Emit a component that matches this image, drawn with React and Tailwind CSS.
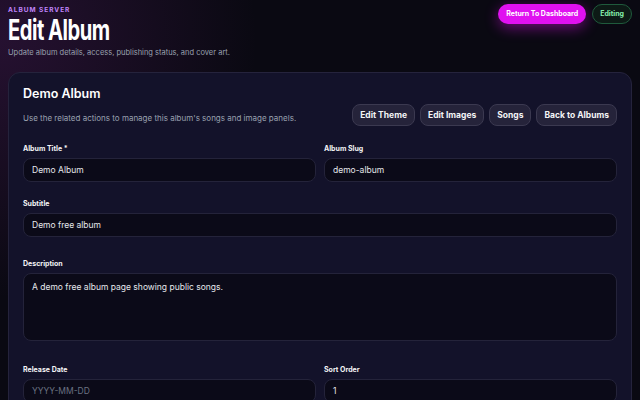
import React from "react";

function Field({ label, value, placeholder, className = "" }) {
  return (
    <div className={className}>
      <div className="text-[7px] font-bold text-gray-100 mb-[5px] leading-[9px]">{label}</div>
      <div className="h-[24px] rounded-lg border border-[#24233a] bg-[#0b0a18] px-2 flex items-center text-[8.5px]">
        {value ? <span className="text-gray-200">{value}</span> : <span className="text-gray-500">{placeholder}</span>}
      </div>
    </div>
  );
}

export default function App() {
  return (
    <div
      className="w-[640px] h-[400px] overflow-hidden bg-[#0a0912] text-white px-2 pt-[4px]"
      style={{ fontFamily: "Inter, 'Noto Sans', sans-serif", backgroundImage: "radial-gradient(circle at 0% 10%, rgba(120,40,140,0.25), transparent 35%)" }}
    >
      <div className="flex justify-between">
        <div>
          <div className="text-[6.5px] font-bold tracking-[0.15em] text-[#c084fc] mt-[1px] leading-[10px]">ALBUM SERVER</div>
          <h1 className="text-[28px] font-bold leading-[30px] tracking-tight origin-left scale-x-[0.72]">Edit Album</h1>
          <p className="text-[7.5px] text-gray-400 mt-[2px]">Update album details, access, publishing status, and cover art.</p>
        </div>
        <div className="flex gap-[6px] items-start">
          <button className="h-[20px] px-[8px] rounded-full bg-[#e011f0] text-[7px] font-bold shadow-[0_4px_14px_rgba(224,17,240,0.45)]">Return To Dashboard</button>
          <button className="h-[20px] px-[7px] rounded-full border border-[#1f5a3c] bg-[#0d1a16] text-[7px] font-bold text-[#86efac]">Editing</button>
        </div>
      </div>
      <div className="mt-[14px] rounded-xl border border-[#25233c] bg-[#13122a] px-[14px] pt-[12px] pb-4">
        <div className="flex justify-between items-end">
          <div>
            <div className="text-[12.5px] font-semibold">Demo Album</div>
            <div className="text-[8px] text-gray-400 mt-[8px] whitespace-nowrap">Use the related actions to manage this album's songs and image panels.</div>
          </div>
          <div className="flex gap-[5px] mb-[-2px]">
            {["Edit Theme", "Edit Images", "Songs", "Back to Albums"].map((t) => (
              <button key={t} className="h-[22px] px-[7px] rounded-lg border border-[#3b3950] bg-[#25233a] text-[8.5px] font-bold text-gray-100">{t}</button>
            ))}
          </div>
        </div>
        <div className="grid grid-cols-2 gap-x-[8px] gap-y-[17px] mt-[20px]">
          <Field label="Album Title *" value="Demo Album" />
          <Field label="Album Slug" value="demo-album" />
          <Field className="col-span-2" label="Subtitle" value="Demo free album" />
          <div className="col-span-2 mt-[5px]">
            <div className="text-[7px] font-bold text-gray-100 mb-[5px] leading-[9px]">Description</div>
            <div className="h-[68px] rounded-lg border border-[#24233a] bg-[#0b0a18] px-2 pt-[7px] text-[8.5px] text-gray-200">A demo free album page showing public songs.</div>
          </div>
          <Field className="mt-[7px]" label="Release Date" placeholder="YYYY-MM-DD" />
          <Field className="mt-[7px]" label="Sort Order" value="1" />
        </div>
      </div>
    </div>
  );
}
